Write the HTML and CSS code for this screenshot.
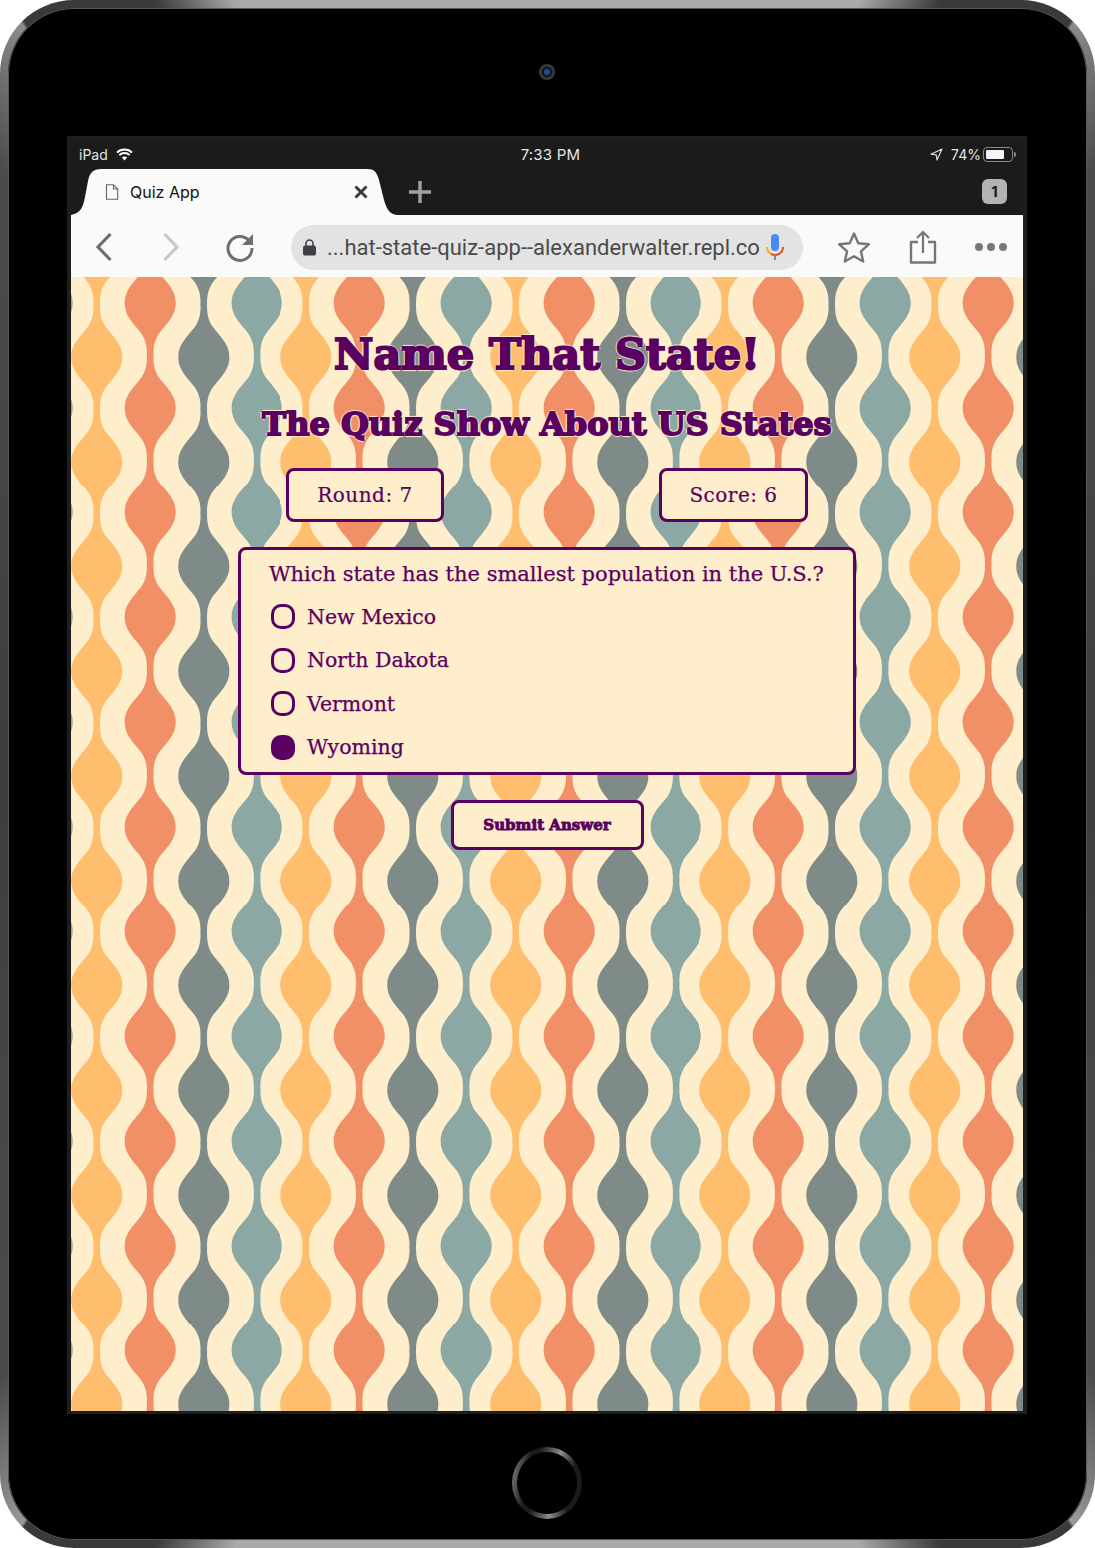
FILE: index.html
```html
<!DOCTYPE html>
<html lang="en">

<head>
    <meta charset="UTF-8">
    <meta name="viewport" content="width=device-width, initial-scale=1.0">
    <title>Quiz App</title>
    <link rel="stylesheet" href="styles.css">
</head>

<body>

    <div class="device">
        <div class="bezel-top">
            <span class="camera"></span>
        </div>

        <div class="screen">
            <div class="status-bar">
                <div class="status-left">
                    <span>iPad</span>
                    <svg class="wifi" width="17" height="13" viewBox="0 0 17 13">
                        <path d="M8.5 12.5 5.9 9.6a3.8 3.8 0 0 1 5.2 0z" fill="#fff"/>
                        <path d="M1 4.6a10.8 10.8 0 0 1 15 0M3.3 7.1a7.5 7.5 0 0 1 10.4 0" fill="none" stroke="#fff" stroke-width="1.9"/>
                    </svg>
                </div>
                <span class="status-time">7:33 PM</span>
                <div class="status-right">
                    <svg class="location" width="13" height="13" viewBox="0 0 13 13">
                        <path d="M12 1 1 6.2l5.2.6.8 5.2z" fill="none" stroke="#ddd" stroke-width="1.2" stroke-linejoin="round"/>
                    </svg>
                    <span>74%</span>
                    <span class="battery"><span class="battery-level"></span></span>
                    <span class="battery-nub"></span>
                </div>
            </div>

            <div class="tab-strip">
                <div class="tab">
                    <svg class="tab-shape" width="326" height="46" viewBox="0 0 326 46">
                        <path d="M0 46C10 44 12 38 14 28L17 12C18.500 4 22 0 30 0H296C303 0 306 3 308 11L313 31C316 41 319 45 326 46Z" fill="#fafaf8"/>
                    </svg>
                    <svg class="tab-file" width="14" height="16" viewBox="0 0 14 16">
                        <path d="M1.500.7H8.500L12.700 5V15.300H1.500ZM8.500.7V5H12.700" fill="none" stroke="#666" stroke-width="1.100"/>
                    </svg>
                    <span class="tab-title">Quiz App</span>
                    <svg class="tab-close" width="14" height="14" viewBox="0 0 14 14">
                        <path d="M1.500 1.500 12.500 12.500M12.500 1.500 1.500 12.500" stroke="#3c3c40" stroke-width="3"/>
                    </svg>
                </div>
                <svg class="new-tab" width="24" height="24" viewBox="0 0 24 24">
                    <path d="M12 1V23M1 12H23" stroke="#a2a2a2" stroke-width="3.400"/>
                </svg>
                <span class="tab-count">1</span>
            </div>

            <div class="toolbar">
                <div class="tool tool-back">
                    <svg width="18" height="30" viewBox="0 0 18 30">
                        <path d="M15.500 2 3 15 15.500 28" fill="none" stroke="#6e6e6e" stroke-width="3.200"/>
                    </svg>
                </div>
                <div class="tool tool-forward">
                    <svg width="18" height="30" viewBox="0 0 18 30">
                        <path d="M2.500 2 15 15 2.500 28" fill="none" stroke="#c9c9c9" stroke-width="3.200"/>
                    </svg>
                </div>
                <div class="tool tool-reload">
                    <svg width="30" height="30" viewBox="0 0 30 30">
                        <path d="M24 8.500A12 12 0 1 0 27 16" fill="none" stroke="#6e6e6e" stroke-width="3"/>
                        <path d="M28 2V13H17Z" fill="#6e6e6e"/>
                    </svg>
                </div>
                <div class="url-bar">
                    <svg class="lock" width="13" height="17" viewBox="0 0 13 17">
                        <path d="M3 7V4.500a3.500 3.500 0 0 1 7 0V7" fill="none" stroke="#3f3f46" stroke-width="1.600"/>
                        <rect y="6.500" width="13" height="10" rx="2" fill="#3f3f46"/>
                    </svg>
                    <span class="url-text">...hat-state-quiz-app--alexanderwalter.repl.co</span>
                    <svg class="mic" width="18" height="26" viewBox="0 0 18 26">
                        <rect x="5" y="0" width="8" height="17" rx="4" fill="#4a8af4"/>
                        <path d="M1 13a8 8 0 0 0 4 6.900" fill="none" stroke="#f5b400" stroke-width="2"/>
                        <path d="M5 19.900a8 8 0 0 0 8 0 8 8 0 0 0 4-6.900" fill="none" stroke="#e0492f" stroke-width="2"/>
                        <path d="M9 21V26" stroke="#8a8a8a" stroke-width="2"/>
                    </svg>
                </div>
                <div class="tool tool-star">
                    <svg width="34" height="32" viewBox="0 0 34 32">
                        <path d="M17 2.500 21.300 12.300 31.800 13.300 23.900 20.300 26.200 30.500 17 25.200 7.800 30.500 10.100 20.300 2.200 13.300 12.700 12.300Z" fill="none" stroke="#767676" stroke-width="2.400" stroke-linejoin="round"/>
                    </svg>
                </div>
                <div class="tool tool-share">
                    <svg width="28" height="34" viewBox="0 0 28 34">
                        <path d="M9 12H2V32.500H26V12H19" fill="none" stroke="#767676" stroke-width="2.400" stroke-linejoin="round"/>
                        <path d="M14 23V2M8 8 14 2 20 8" fill="none" stroke="#767676" stroke-width="2.200"/>
                    </svg>
                </div>
                <div class="tool tool-more">
                    <span class="dot"></span><span class="dot"></span><span class="dot"></span>
                </div>
            </div>

            <div class="page">
                <h1>Name That State!</h1>
                <h2>The Quiz Show About US States</h2>

                <div class="stats">
                    <div class="stat stat-round">Round: 7</div>
                    <div class="stat stat-score">Score: 6</div>
                </div>

                <form class="question">
                    <p class="question-text">Which state has the smallest population in the U.S.?</p>
                    <label class="answer"><span class="radio"></span>New Mexico</label>
                    <label class="answer"><span class="radio"></span>North Dakota</label>
                    <label class="answer"><span class="radio"></span>Vermont</label>
                    <label class="answer"><span class="radio checked"></span>Wyoming</label>
                </form>

                <button class="submit" type="button">Submit Answer</button>
            </div>
        </div>

        <div class="bezel-bottom">
            <span class="home-button"></span>
        </div>
    </div>

</body>

</html>
```
FILE: styles.css
```css
* {
    box-sizing: border-box;
}

html, body {
    margin: 0;
    height: 100%;
    background: #fff;
}

body {
    font-family: "Inter", "Liberation Sans", sans-serif;
}

/* tablet frame */
.device {
    width: 1095px;
    height: 1548px;
    padding: 0 60px 0 59px;
    border: 8px solid transparent;
    border-radius: 74px;
    background:
        linear-gradient(#000, #000) padding-box,
        conic-gradient(#a9a9a9 0deg, #a9a9a9 22deg, #3a3a3c 27deg, #3a3a3c 34.8deg, #8c8c8e 35deg, #4b4b4d 42deg, #3c3c3e 90deg, #4b4b4d 138deg, #9a9a9c 145deg, #3a3a3c 145.2deg, #3a3a3c 153deg, #a9a9a9 158deg, #a9a9a9 202deg, #3a3a3c 207deg, #3a3a3c 214.8deg, #9a9a9c 215deg, #4b4b4d 222deg, #3c3c3e 270deg, #4b4b4d 318deg, #8c8c8e 325deg, #3a3a3c 325.2deg, #3a3a3c 333deg, #a9a9a9 338deg) border-box;
    box-shadow: inset 0 0 0 1px #58585a;
    display: flex;
    flex-direction: column;
}

.bezel-top {
    height: 128px;
    display: flex;
    justify-content: center;
    padding-top: 56px;
}

.camera {
    width: 16px;
    height: 16px;
    border-radius: 50%;
    background: radial-gradient(circle, #1d4f96 0 2.5px, #14161c 3.5px 4.5px, #45454a 7px, #2c2c30 8px);
}

.bezel-bottom {
    flex: 1;
    display: flex;
    justify-content: center;
    padding-top: 33px;
}

.home-button {
    width: 70px;
    height: 72px;
    border-radius: 50%;
    border: 5px solid transparent;
    background: linear-gradient(#000, #000) padding-box, linear-gradient(100deg, #8d8d8d, #1b1b1b 25%, #1b1b1b 35%, #8d8d8d 60%, #1b1b1b 80%) border-box;
}

.screen {
    height: 1278px;
    background: #1b1b1c;
    border: 4px solid #1e1e20;
    border-bottom-width: 3px;
    display: flex;
    flex-direction: column;
}

/* status bar */
.status-bar {
    height: 29px;
    padding: 0 7px 0 8px;
    display: flex;
    align-items: center;
    justify-content: space-between;
    color: #e4e4e4;
    font-size: 14px;
}

.status-left, .status-right {
    display: flex;
    align-items: center;
    gap: 8px;
}

.status-right {
    gap: 4px;
}

.location {
    margin-right: 4px;
}

.status-time {
    margin-left: 38px;
    font-size: 15px;
    letter-spacing: 0.2px;
}

.battery {
    width: 30px;
    height: 15px;
    margin-left: -2px;
    border: 1px solid #8a8a8a;
    border-radius: 4px;
    padding: 2px;
    display: block;
}

.battery-level {
    display: block;
    width: 76%;
    height: 100%;
    background: #f4f4f4;
    border-radius: 1px;
}

.battery-nub {
    width: 2px;
    height: 5px;
    margin-left: -3px;
    background: #8a8a8a;
    border-radius: 0 2px 2px 0;
}

/* tabs */
.tab-strip {
    height: 46px;
    display: flex;
    align-items: center;
}

.tab {
    width: 326px;
    height: 46px;
    position: relative;
    display: flex;
    align-items: center;
    padding-left: 34px;
    color: #111;
    font-size: 16px;
}

.tab-shape {
    position: absolute;
    left: 0;
    top: 0;
}

.tab-file, .tab-title, .tab-close {
    position: relative;
}

.tab-title {
    margin-left: 11px;
    flex: 1;
}

.tab-close {
    margin-right: 29px;
}

.new-tab {
    margin-left: 11px;
}

.tab-count {
    margin-left: auto;
    margin-right: 16px;
    margin-bottom: 2px;
    width: 25px;
    height: 25px;
    border-radius: 6px;
    background: #b3b3b3;
    color: #1b1b1c;
    font-size: 15px;
    font-weight: 700;
    display: flex;
    align-items: center;
    justify-content: center;
}

/* toolbar */
.toolbar {
    height: 62px;
    padding-top: 2px;
    background: #fafaf8;
    display: flex;
    align-items: center;
}

.tool {
    display: flex;
    align-items: center;
    justify-content: center;
}

.tool-back {
    width: 65px;
}

.tool-forward {
    width: 69px;
}

.tool-reload {
    width: 70px;
}

.url-bar {
    margin-left: 16px;
    width: 512px;
    height: 45px;
    border-radius: 23px;
    background: #e3e3e3;
    display: flex;
    align-items: center;
    padding-left: 12px;
    color: #4a4a4a;
    font-family: "Roboto", sans-serif;
    font-size: 22px;
}

.url-text {
    margin-left: 11px;
    white-space: nowrap;
}

.mic {
    margin-left: 6px;
}

.tool-star {
    margin-left: 17px;
    width: 68px;
}

.tool-share {
    width: 70px;
}

.tool-more {
    width: 65px;
    gap: 4px;
}

.dot {
    width: 8px;
    height: 8px;
    border-radius: 50%;
    background: #777;
}

/* quiz page */
.page {
    flex: 1;
    padding-top: 53px;
    text-align: center;
    color: #5a0060;
    background-color: #feeecb;
    background-image: url("data:image/svg+xml,%3Csvg xmlns='http://www.w3.org/2000/svg' xmlns:xlink='http://www.w3.org/1999/xlink' width='209.5' height='104.750' viewBox='0 0 209.500 104.750'%3E%3Cdefs%3E%3Cpath id='b' d='M-3.200 53.500V52.400C-3.200 42-4.500 37-9 30-18 19-25.500 12-25.500 0-25.500-12-18-19-9-30-4.500-37-3.200-42-3.200-52.400V-53.500H3.200V-52.400C3.200-42 4.500-37 9-30 18-19 25.500-12 25.500 0 25.500 12 18 19 9 30 4.500 37 3.200 42 3.200 52.400V53.500Z'/%3E%3C/defs%3E%3Crect width='209.500' height='104.750' fill='%23feeecb'/%3E%3Cg fill='%23febe6e'%3E%3Cuse xlink:href='%23b' x='25.700' y='80'/%3E%3Cuse xlink:href='%23b' x='25.700' y='-24.750'/%3E%3C/g%3E%3Cg fill='%23f18f67'%3E%3Cuse xlink:href='%23b' x='79' y='26'/%3E%3Cuse xlink:href='%23b' x='79' y='130.750'/%3E%3C/g%3E%3Cg fill='%237f8b88'%3E%3Cuse xlink:href='%23b' x='132.500' y='80'/%3E%3Cuse xlink:href='%23b' x='132.500' y='-24.750'/%3E%3C/g%3E%3Cg fill='%238ba8a5'%3E%3Cuse xlink:href='%23b' x='185.700' y='26'/%3E%3Cuse xlink:href='%23b' x='185.700' y='130.750'/%3E%3Cuse xlink:href='%23b' x='-23.800' y='26'/%3E%3Cuse xlink:href='%23b' x='-23.800' y='130.750'/%3E%3C/g%3E%3C/svg%3E");
    background-size: 209.5px 104.75px;
}

h1, h2, .submit {
    font-family: "DejaVu Serif", serif;
    font-weight: 700;
}

h1, h2 {
    -webkit-text-stroke: 2.2px #5a0060;
    text-shadow: 2px 0 1px #feeecb, -2px 0 1px #feeecb, 0 2px 1px #feeecb, 0 -2px 1px #feeecb;
}

h1 {
    margin: 1px 0 0;
    font-size: 43px;
    line-height: 46px;
}

h2 {
    margin: 29px 0 0;
    font-size: 32px;
    line-height: 36px;
    -webkit-text-stroke-width: 1.8px;
}

.stats {
    width: 522px;
    margin: 26px auto 0;
    display: flex;
    justify-content: space-between;
}

.stat, .question, .submit {
    background: #feeecb;
    border: 3px solid #5a0060;
    border-radius: 8px;
}

.stat {
    height: 54px;
    display: flex;
    align-items: center;
    justify-content: center;
    font-family: "DejaVu Serif", serif;
    font-size: 20px;
    letter-spacing: 0.5px;
    -webkit-text-stroke: 0.2px #5a0060;
}

.stat-round {
    width: 158px;
}

.stat-score {
    width: 149px;
}

.question {
    width: 618px;
    height: 228px;
    margin: 25px auto 0;
    padding: 11px 0 0 28px;
    text-align: left;
    font-family: "DejaVu Serif", serif;
    -webkit-text-stroke: 0.25px #5a0060;
}

.question-text {
    margin: 0 0 8px;
    font-size: 21px;
    line-height: 26px;
    white-space: nowrap;
}

.answer {
    height: 43.5px;
    display: flex;
    align-items: center;
    gap: 12px;
    font-size: 20.5px;
    padding-left: 2px;
}

.radio {
    width: 24px;
    height: 25px;
    border: 3px solid #5a0060;
    border-radius: 10px;
}

.radio.checked {
    background: #5a0060;
}

.submit {
    display: block;
    width: 193px;
    height: 50px;
    margin: 25px auto 0;
    color: #5a0060;
    font-size: 15px;
    padding: 0;
    -webkit-text-stroke: 0.9px #5a0060;
}
```
